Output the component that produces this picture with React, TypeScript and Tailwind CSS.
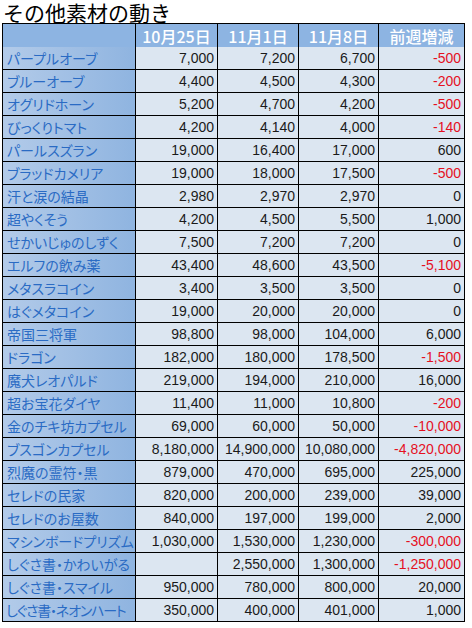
const rows: [string, string, string, string, string][] = [
  ['パープルオーブ', '7,000', '7,200', '6,700', '-500'],
  ['ブルーオーブ', '4,400', '4,500', '4,300', '-200'],
  ['オグリドホーン', '5,200', '4,700', '4,200', '-500'],
  ['びっくりトマト', '4,200', '4,140', '4,000', '-140'],
  ['パールスズラン', '19,000', '16,400', '17,000', '600'],
  ['ブラッドカメリア', '19,000', '18,000', '17,500', '-500'],
  ['汗と涙の結晶', '2,980', '2,970', '2,970', '0'],
  ['超やくそう', '4,200', '4,500', '5,500', '1,000'],
  ['せかいじゅのしずく', '7,500', '7,200', '7,200', '0'],
  ['エルフの飲み薬', '43,400', '48,600', '43,500', '-5,100'],
  ['メタスラコイン', '3,400', '3,500', '3,500', '0'],
  ['はぐメタコイン', '19,000', '20,000', '20,000', '0'],
  ['帝国三将軍', '98,800', '98,000', '104,000', '6,000'],
  ['ドラゴン', '182,000', '180,000', '178,500', '-1,500'],
  ['魔犬レオパルド', '219,000', '194,000', '210,000', '16,000'],
  ['超お宝花ダイヤ', '11,400', '11,000', '10,800', '-200'],
  ['金のチキ坊カプセル', '69,000', '60,000', '50,000', '-10,000'],
  ['ブスゴンカプセル', '8,180,000', '14,900,000', '10,080,000', '-4,820,000'],
  ['烈魔の霊符・黒', '879,000', '470,000', '695,000', '225,000'],
  ['セレドの民家', '820,000', '200,000', '239,000', '39,000'],
  ['セレドのお屋数', '840,000', '197,000', '199,000', '2,000'],
  ['マシンボードプリズム', '1,030,000', '1,530,000', '1,230,000', '-300,000'],
  ['しぐさ書・かわいがる', '', '2,550,000', '1,300,000', '-1,250,000'],
  ['しぐさ書・スマイル', '950,000', '780,000', '800,000', '20,000'],
  ['しぐさ書・ネオンハート', '350,000', '400,000', '401,000', '1,000'],
]

const headers = ['10月25日', '11月1日', '11月8日', '前週増減']

export default function App() {
  return (
    <div className="w-[472px] h-[628px] bg-white overflow-hidden">
      {/* Title */}
      <div className="h-[23px] pt-[2px] pl-[3px] font-['Noto_Sans_CJK_JP',sans-serif] text-[21px] leading-[21px] text-black whitespace-nowrap">
        その他素材の動き
      </div>

      {/* Table */}
      <div className="ml-[2px] w-[463px] grid grid-cols-[132px_81px_80px_79px_85px] auto-rows-[22px] gap-px p-px bg-black">
        <div className="h-[24px] bg-[#8db4e2]" />
        {headers.map((h) => (
          <div
            key={h}
            className="h-[24px] bg-[#8db4e2] flex items-center justify-center text-white text-[16px] font-medium font-['Noto_Sans_CJK_JP',sans-serif] leading-none"
          >
            {h}
          </div>
        ))}

        {rows.map(([name, a, b, c, d]) => (
          <div key={name} className="contents">
            <div
              className={
                name.length > 10
                  ? "bg-gradient-to-r from-[#b3cbe9] to-[#8fb4e0] flex items-center pl-[3px] whitespace-nowrap overflow-hidden text-[14px] leading-none text-[#2a6bc4] font-['Noto_Sans_CJK_JP',sans-serif] [font-feature-settings:'palt'] tracking-[-1.2px]"
                  : "bg-gradient-to-r from-[#b3cbe9] to-[#8fb4e0] flex items-center pl-[4px] whitespace-nowrap overflow-hidden text-[14px] leading-none text-[#2a6bc4] font-['Noto_Sans_CJK_JP',sans-serif] [font-feature-settings:'palt']"
              }
            >
              {name}
            </div>
            {[a, b, c].map((v, i) => (
              <div
                key={i}
                className="bg-[#dce6f1] flex items-center justify-end pr-[3px] text-[14px] leading-none text-[#1a1a1a] font-['Liberation_Sans',Arial,sans-serif]"
              >
                {v}
              </div>
            ))}
            <div
              className={
                d.startsWith('-')
                  ? 'bg-[#dce6f1] flex items-center justify-end pr-[3px] text-[14px] leading-none text-[#e5101f] font-["Liberation_Sans",Arial,sans-serif]'
                  : 'bg-[#dce6f1] flex items-center justify-end pr-[3px] text-[14px] leading-none text-[#1a1a1a] font-["Liberation_Sans",Arial,sans-serif]'
              }
            >
              {d}
            </div>
          </div>
        ))}
      </div>
    </div>
  )
}
